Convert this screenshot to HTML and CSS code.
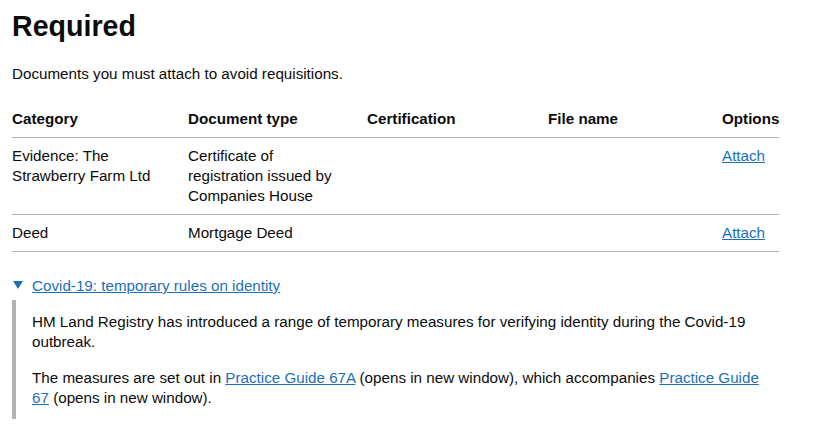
FILE: index.html
```html
<!DOCTYPE html>
<html lang="en">
<head>
<meta charset="utf-8">
<title>Required</title>
<link rel="stylesheet" href="styles.css">
</head>
<body>
<main class="page">
  <h1 class="title">Required</h1>
  <p class="lead">Documents you must attach to avoid requisitions.</p>
  <table class="docs">
    <thead>
      <tr>
        <th class="c-cat">Category</th>
        <th class="c-type">Document type</th>
        <th class="c-cert">Certification</th>
        <th class="c-file">File name</th>
        <th class="c-opt">Options</th>
      </tr>
    </thead>
    <tbody>
      <tr>
        <td>Evidence: The Strawberry Farm Ltd</td>
        <td>Certificate of registration issued by Companies House</td>
        <td></td>
        <td></td>
        <td><a href="#" class="link">Attach</a></td>
      </tr>
      <tr>
        <td>Deed</td>
        <td>Mortgage Deed</td>
        <td></td>
        <td></td>
        <td><a href="#" class="link">Attach</a></td>
      </tr>
    </tbody>
  </table>
  <details class="details" open>
    <summary class="summary"><span class="summary-text">Covid-19: temporary rules on identity</span></summary>
    <div class="details-text">
      <p>HM Land Registry has introduced a range of temporary measures for verifying identity during the Covid-19 outbreak.</p>
      <p>The measures are set out in <a href="#" class="link">Practice Guide 67A</a> (opens in new window), which accompanies <a href="#" class="link">Practice Guide 67</a> (opens in new window).</p>
    </div>
  </details>
</main>
</body>
</html>
```
FILE: styles.css
```css
html, body {
  margin: 0;
  padding: 0;
  background: #ffffff;
}
body {
  font-family: "Liberation Sans", Arial, sans-serif;
  font-size: 15.2px;
  line-height: 20px;
  color: #0b0c0c;
}
.page {
  width: 767px;
  padding: 10px 0 0 12px;
}
.title {
  margin: 0;
  font-size: 28.6px;
  line-height: 32px;
  font-weight: 700;
}
.lead {
  margin: 22px 0 17px;
}
.link {
  color: #1d70b8;
  text-decoration: underline;
  text-underline-offset: 1px;
}
.docs {
  width: 767px;
  border-collapse: collapse;
  table-layout: fixed;
}
.docs th,
.docs td {
  text-align: left;
  vertical-align: top;
  padding: 8px 20px 8px 0;
  border-bottom: 1px solid #b1b4b6;
}
.docs th {
  font-weight: 700;
}
.docs th:last-child,
.docs td:last-child {
  padding-right: 0;
}
.c-cat { width: 156px; }
.c-type { width: 159px; }
.c-cert { width: 161px; }
.c-file { width: 154px; }
.c-opt { width: 57px; }
.details {
  margin-top: 24px;
}
.summary {
  display: block;
  position: relative;
  padding-left: 20px;
  color: #1d70b8;
  cursor: pointer;
  list-style: none;
}
.summary::-webkit-details-marker {
  display: none;
}
.summary::before {
  content: "";
  position: absolute;
  left: 1px;
  top: 5px;
  width: 0;
  height: 0;
  border-style: solid;
  border-width: 8px 5px 0 5px;
  border-color: #1d70b8 transparent transparent transparent;
}
.summary-text {
  text-decoration: underline;
  text-underline-offset: 1px;
}
.details-text {
  margin-top: 4px;
  border-left: 4px solid #b1b4b6;
  padding: 12px 16px 11px 16px;
}
.details-text p {
  margin: 0 0 16px;
}
.details-text p:last-child {
  margin-bottom: 0;
}
```
